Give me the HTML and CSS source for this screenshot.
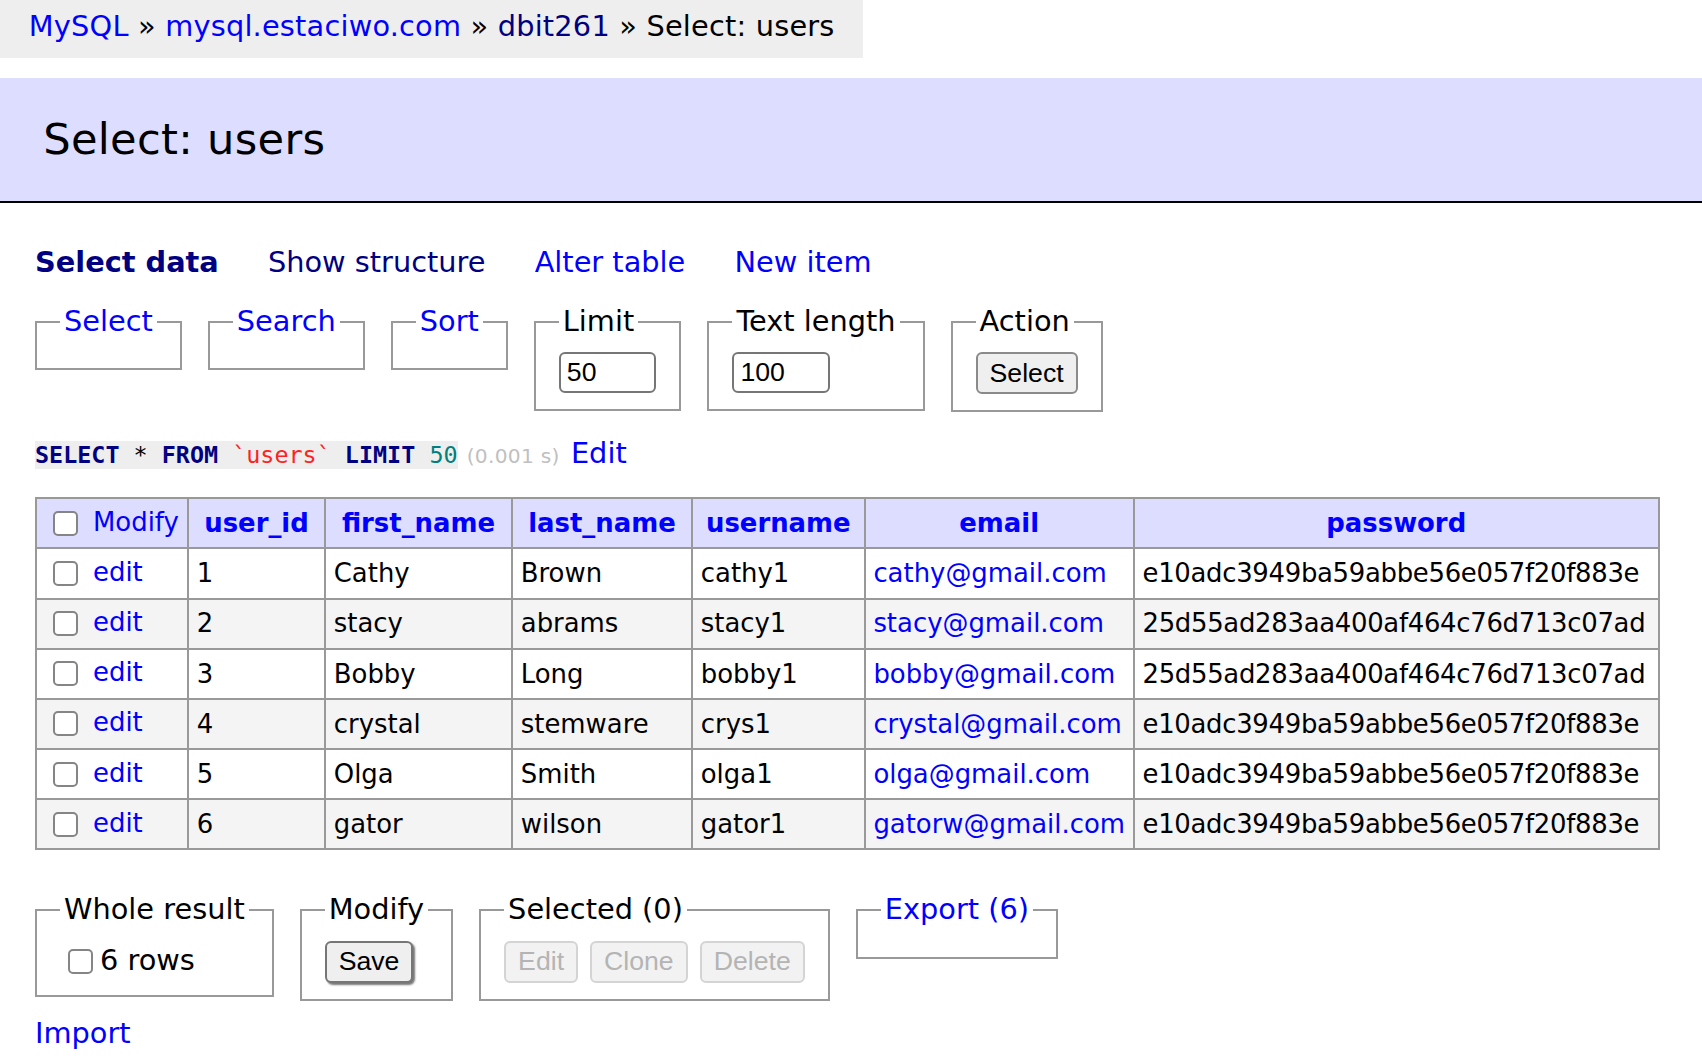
FILE: index.html
```html
<!DOCTYPE html>
<html lang="en">
<head>
<meta charset="utf-8">
<title>Select: users - Adminer</title>
<link rel="stylesheet" href="styles.css">
</head>
<body>
<div class="breadcrumb"><a href="#">MySQL</a> » <a href="#">mysql.estaciwo.com</a> » <a href="#" class="visited">dbit261</a> » Select: users</div>
<div class="content">
  <h2 class="page-title">Select: users</h2>
  <p class="links"><a href="#" class="visited active">Select data</a> <a href="#" class="visited">Show structure</a> <a href="#">Alter table</a> <a href="#">New item</a></p>
  <form class="filters">
    <fieldset class="fs"><legend><a href="#">Select</a></legend></fieldset>
    <fieldset class="fs"><legend><a href="#">Search</a></legend></fieldset>
    <fieldset class="fs"><legend><a href="#">Sort</a></legend></fieldset>
    <fieldset class="fs"><legend>Limit</legend><div class="fs-body"><input class="num" type="text" value="50"></div></fieldset>
    <fieldset class="fs"><legend>Text length</legend><div class="fs-body"><input class="num" type="text" value="100"></div></fieldset>
    <fieldset class="fs"><legend>Action</legend><div class="fs-body"><button type="button" class="btn">Select</button></div></fieldset>
  </form>
  <p class="sql"><code class="jush"><b class="kw">SELECT</b> * <b class="kw">FROM</b> <span class="bac">`users`</span> <b class="kw">LIMIT</b> <span class="num-lit">50</span></code> <span class="time">(0.001 s)</span> <a href="#">Edit</a></p>
  <table class="data">
    <thead>
      <tr>
        <td class="c1"><input type="checkbox" class="cb"> <a href="#">Modify</a></td>
        <th class="c2"><a href="#">user_id</a></th>
        <th class="c3"><a href="#">first_name</a></th>
        <th class="c4"><a href="#">last_name</a></th>
        <th class="c5"><a href="#">username</a></th>
        <th class="c6"><a href="#">email</a></th>
        <th class="c7"><a href="#">password</a></th>
      </tr>
    </thead>
    <tbody>
      <tr><td><input type="checkbox" class="cb"> <a href="#">edit</a></td><td>1</td><td>Cathy</td><td>Brown</td><td>cathy1</td><td><a href="#">cathy@gmail.com</a></td><td class="hash">e10adc3949ba59abbe56e057f20f883e</td></tr>
      <tr><td><input type="checkbox" class="cb"> <a href="#">edit</a></td><td>2</td><td>stacy</td><td>abrams</td><td>stacy1</td><td><a href="#">stacy@gmail.com</a></td><td class="hash">25d55ad283aa400af464c76d713c07ad</td></tr>
      <tr><td><input type="checkbox" class="cb"> <a href="#">edit</a></td><td>3</td><td>Bobby</td><td>Long</td><td>bobby1</td><td><a href="#">bobby@gmail.com</a></td><td class="hash">25d55ad283aa400af464c76d713c07ad</td></tr>
      <tr><td><input type="checkbox" class="cb"> <a href="#">edit</a></td><td>4</td><td>crystal</td><td>stemware</td><td>crys1</td><td><a href="#">crystal@gmail.com</a></td><td class="hash">e10adc3949ba59abbe56e057f20f883e</td></tr>
      <tr><td><input type="checkbox" class="cb"> <a href="#">edit</a></td><td>5</td><td>Olga</td><td>Smith</td><td>olga1</td><td><a href="#">olga@gmail.com</a></td><td class="hash">e10adc3949ba59abbe56e057f20f883e</td></tr>
      <tr><td><input type="checkbox" class="cb"> <a href="#">edit</a></td><td>6</td><td>gator</td><td>wilson</td><td>gator1</td><td><a href="#">gatorw@gmail.com</a></td><td class="hash">e10adc3949ba59abbe56e057f20f883e</td></tr>
    </tbody>
  </table>
  <div class="footer">
    <fieldset class="fs"><legend>Whole result</legend><label class="fs-line"><input type="checkbox" class="cb">6 rows</label></fieldset>
    <fieldset class="fs"><legend>Modify</legend><div class="fs-body"><button type="button" class="btn default">Save</button></div></fieldset>
    <fieldset class="fs"><legend>Selected (0)</legend><div class="fs-body"><button type="button" class="btn" disabled>Edit</button><button type="button" class="btn" disabled>Clone</button><button type="button" class="btn" disabled>Delete</button></div></fieldset>
    <fieldset class="fs"><legend><a href="#">Export (6)</a></legend></fieldset>
  </div>
  <div class="import"><a href="#">Import</a></div>
</div>
</body>
</html>
```

FILE: styles.css
```css
body {
  margin: 0;
  color: #000;
  background: #fff;
  font-family: "DejaVu Sans", Verdana, sans-serif;
  font-size: 28.8px;
  line-height: 1.25;
}

a {
  color: blue;
  text-decoration: none;
}

a.visited {
  color: navy;
}

.breadcrumb {
  width: fit-content;
  height: 57.6px;
  line-height: 53.5px;
  padding: 0 28.8px;
  background: #eee;
  white-space: nowrap;
  letter-spacing: 0.2px;
}

.content {
  margin: 20px 0 0 35px;
}

.page-title {
  margin: 0 0 42px -35px;
  padding: 34.56px 43.2px;
  font-size: 43.2px;
  font-weight: normal;
  line-height: 1.25;
  letter-spacing: 0.3px;
  background: #ddf;
  border-bottom: 2px solid #000;
}

.links {
  margin: 0;
  white-space: nowrap;
}

.links a {
  margin-right: 40px;
}

.links .active {
  font-weight: bold;
}

.filters,
.footer {
  display: flex;
  align-items: flex-start;
  gap: 26px;
  margin: 23px 0 0;
}

.fs {
  margin: 0;
  padding: 14.4px 23px;
  border: 2px solid #999;
  min-width: 0;
}

.fs legend {
  padding: 0 4px;
  white-space: nowrap;
}

.fs-body {
  display: flex;
  align-items: center;
  gap: 12px;
  margin: -2px 0 2px;
}

.num {
  width: 97.6px;
  height: 41px;
  box-sizing: border-box;
  margin: 0;
  padding: 2px 6px;
  border: 2px solid #767676;
  border-radius: 6px;
  background: #fff;
  color: #000;
  font-family: "Liberation Sans", Arial, sans-serif;
  font-size: 26.67px;
}

.btn {
  height: 42px;
  box-sizing: border-box;
  margin: 0;
  padding: 0 12px;
  border: 2px solid #8a8a8a;
  border-radius: 6px;
  background: #efefef;
  color: #000;
  font-family: "Liberation Sans", Arial, sans-serif;
  font-size: 26.67px;
  line-height: 1;
}

.btn.default {
  box-shadow: 2px 2px 2px #777;
  border-color: #767676;
}

.btn:disabled {
  color: #b4b4b4;
  background: #f2f2f2;
  border-color: #d4d4d4;
}

.sql {
  margin: 24px 0 0;
  white-space: nowrap;
}

.jush {
  font-family: "DejaVu Sans Mono", monospace;
  font-size: 23.4px;
  background: #eee;
}

.kw {
  color: navy;
  font-weight: bold;
}

.bac {
  color: #f22;
}

.num-lit {
  color: #007f7f;
}

.time {
  color: silver;
  font-size: 20.16px;
  letter-spacing: 0.3px;
  margin-right: 2px;
}

.data {
  margin: 24.8px 0 0;
  border-spacing: 0;
  border-top: 2px solid #999;
  border-left: 2px solid #999;
  font-size: 25.92px;
}

.data td,
.data th {
  box-sizing: border-box;
  padding: 5.58px 7.78px;
  border-right: 2px solid #999;
  border-bottom: 2px solid #999;
  text-align: left;
  white-space: nowrap;
  vertical-align: middle;
}

.data td.hash {
  letter-spacing: -0.3px;
}

.data thead td,
.data thead th {
  background: #ddf;
}

.data thead th {
  padding: 5.58px 12.96px;
  text-align: center;
}

.data tbody tr:nth-child(2n) {
  background: #f4f4f4;
}

.c1 { width: 152px; }
.c2 { width: 137px; }
.c3 { width: 187px; }
.c4 { width: 180px; }
.c5 { width: 170px; }
.c6 { width: 266px; }
.c7 { width: 525px; }

.cb {
  -webkit-appearance: none;
  appearance: none;
  width: 25px;
  height: 25px;
  box-sizing: border-box;
  margin: 6px 7px 6px 8px;
  border: 2px solid #858585;
  border-radius: 5px;
  background: #fff;
  vertical-align: middle;
}

.footer {
  margin-top: 42px;
  padding-bottom: 14.4px;
}

.fs-line {
  display: block;
  white-space: nowrap;
}

.import {
  line-height: 36px;
}
```
